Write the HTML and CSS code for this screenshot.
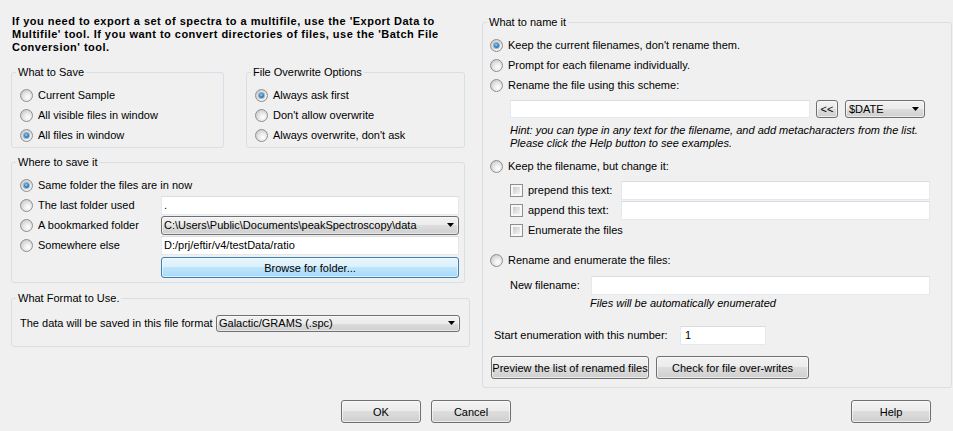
FILE: index.html
```html
<!DOCTYPE html>
<html>
<head>
<meta charset="utf-8">
<link rel="stylesheet" href="styles.css">
</head>
<body>
<div class="dialog">
  <div class="main">
    <div class="left">
      <p class="intro">If you need to export a set of spectra to a multifile, use the 'Export Data to<br>Multifile' tool. If you want to convert directories of files, use the 'Batch File<br>Conversion' tool.</p>
      <div class="pair">
        <fieldset class="grp g-save">
          <legend>What to Save</legend>
          <div class="opts">
            <div class="opt"><span class="rb"></span>Current Sample</div>
            <div class="opt"><span class="rb"></span>All visible files in window</div>
            <div class="opt"><span class="rb on"></span>All files in window</div>
          </div>
        </fieldset>
        <fieldset class="grp g-over">
          <legend>File Overwrite Options</legend>
          <div class="opts">
            <div class="opt"><span class="rb on"></span>Always ask first</div>
            <div class="opt"><span class="rb"></span>Don't allow overwrite</div>
            <div class="opt"><span class="rb"></span>Always overwrite, don't ask</div>
          </div>
        </fieldset>
      </div>
      <fieldset class="grp g-where">
        <legend>Where to save it</legend>
        <div class="where">
          <div class="opt span2"><span class="rb on"></span>Same folder the files are in now</div>
          <div class="opt"><span class="rb"></span>The last folder used</div>
          <div class="tb">.</div>
          <div class="opt"><span class="rb"></span>A bookmarked folder</div>
          <div class="combo"><span>C:\Users\Public\Documents\peakSpectroscopy\data</span><svg class="arr" width="7" height="4" viewBox="0 0 7 4"><path d="M0 0H7L3.5 4Z" fill="#000"/></svg></div>
          <div class="opt"><span class="rb"></span>Somewhere else</div>
          <div class="tb">D:/prj/eftir/v4/testData/ratio</div>
          <div class="btn btn-focus browse">Browse for folder...</div>
        </div>
      </fieldset>
      <fieldset class="grp g-fmt">
        <legend>What Format to Use.</legend>
        <div class="fmt">
          <div class="lbl">The data will be saved in this file format</div>
          <div class="combo combo-fmt"><span>Galactic/GRAMS (.spc)</span><svg class="arr" width="7" height="4" viewBox="0 0 7 4"><path d="M0 0H7L3.5 4Z" fill="#000"/></svg></div>
        </div>
      </fieldset>
    </div>
    <fieldset class="grp g-name">
      <legend>What to name it</legend>
      <div class="nbody">
        <div class="opt"><span class="rb on"></span>Keep the current filenames, don't rename them.</div>
        <div class="opt"><span class="rb"></span>Prompt for each filename individually.</div>
        <div class="opt"><span class="rb"></span>Rename the file using this scheme:</div>
        <div class="scheme">
          <div class="tb tb-scheme"></div>
          <div class="btn btn-sm">&lt;&lt;</div>
          <div class="combo combo-date"><span>$DATE</span><svg class="arr" width="7" height="4" viewBox="0 0 7 4"><path d="M0 0H7L3.5 4Z" fill="#000"/></svg></div>
        </div>
        <p class="hint">Hint: you can type in any text for the filename, and add metacharacters from the list.<br>Please click the Help button to see examples.</p>
        <div class="opt r4"><span class="rb"></span>Keep the filename, but change it:</div>
        <div class="chk">
          <div class="opt"><span class="cb"></span>prepend this text:</div>
          <div class="tb"></div>
          <div class="opt"><span class="cb"></span>append this text:</div>
          <div class="tb"></div>
          <div class="opt span2"><span class="cb"></span>Enumerate the files</div>
        </div>
        <div class="opt r5"><span class="rb"></span>Rename and enumerate the files:</div>
        <div class="newname">
          <div class="lbl">New filename:</div>
          <div class="tb"></div>
        </div>
        <p class="auto">Files will be automatically enumerated</p>
        <div class="start">
          <div class="lbl">Start enumeration with this number:</div>
          <div class="tb tb-num">1</div>
        </div>
        <div class="acts">
          <div class="btn btn-preview"><span>Preview the list of renamed files</span></div>
          <div class="btn btn-check">Check for file over-writes</div>
        </div>
      </div>
    </fieldset>
  </div>
  <div class="bottom">
    <div class="btn btn-dlg">OK</div>
    <div class="btn btn-dlg">Cancel</div>
    <div class="btn btn-dlg help">Help</div>
  </div>
</div>
</body>
</html>
```

FILE: styles.css
```css
* { box-sizing: border-box; }
html, body { margin: 0; padding: 0; }
body {
  background: #f0f0f0;
  font-family: "Liberation Sans", Arial, sans-serif;
  font-size: 11px;
  color: #000;
}
.dialog { width: 953px; height: 431px; overflow: hidden; }
.main { display: flex; gap: 11px; padding: 15px 0 0 11px; align-items: flex-start; }
.left { width: 460px; flex: none; }
.intro { margin: 0; font-weight: bold; line-height: 13px; padding-left: 1px; white-space: nowrap; letter-spacing: 0.48px; }
.pair { display: flex; gap: 22px; margin-top: 11px; }

.grp {
  margin: 0;
  padding: 0;
  border: 1px solid #d5dfe5;
  border-radius: 3px;
  min-width: 0;
}
.grp legend { padding: 0 2px; margin-left: 4px; line-height: 14px; }

.g-save { width: 213px; }
.g-over { width: 219px; }
.opts { padding: 6px 0 2px 8px; }
.opt { display: flex; align-items: center; gap: 5px; height: 20px; white-space: nowrap; }
.span2 { grid-column: 1 / span 2; }

.rb {
  width: 13px; height: 13px; flex: none;
  border-radius: 50%;
  border: 1px solid #8e8f8f;
  background: radial-gradient(circle at 62% 66%, #ffffff 0, #ececec 35%, #bdbdbd 100%);
  display: flex; align-items: center; justify-content: center;
}
.rb.on::after {
  content: "";
  width: 5px; height: 5px; border-radius: 50%;
  background: radial-gradient(circle at 45% 40%, #a6dcfb 0, #2c86cc 45%, #0d4a84 100%);
  box-shadow: 0 0 0 1px rgba(20,70,120,0.35);
}
.cb {
  width: 13px; height: 13px; flex: none;
  border: 1px solid #8e8f8f;
  padding: 2px;
  background: linear-gradient(135deg, #cbcbcb, #f3f3f3) content-box, #f7f7f7;
}

.tb {
  background: #fff;
  border: 1px solid #e3e9ef;
  border-top-color: #d9dde2;
  height: 19px;
  display: flex; align-items: center;
  padding-left: 2px;
  white-space: nowrap; overflow: hidden;
}
.combo {
  display: flex; align-items: center; justify-content: space-between;
  border: 1px solid #707070;
  border-radius: 3px;
  background: linear-gradient(#f2f2f2 0, #ebebeb 50%, #dddddd 50%, #cfcfcf 100%);
  box-shadow: inset 0 0 0 1px rgba(255,255,255,0.55);
  height: 19px;
  padding: 0 4px 0 2px;
  white-space: nowrap; overflow: hidden;
}
.arr { flex: none; }
.btn {
  display: flex; align-items: center; justify-content: center;
  border: 1px solid #707070;
  border-radius: 3px;
  background: linear-gradient(#f2f2f2 0, #ebebeb 50%, #dddddd 50%, #cfcfcf 100%);
  box-shadow: inset 0 0 0 1px rgba(255,255,255,0.6);
  white-space: nowrap; overflow: hidden;
}
.btn-focus {
  border-color: #3c7fb1;
  background: linear-gradient(#eaf6fd 0, #d9f0fc 50%, #bee6fd 50%, #a7d9f5 100%);
}

.g-where { width: 454px; margin-top: 7px; }
.where {
  display: grid;
  grid-template-columns: 141px 298px;
  grid-template-rows: repeat(4, 20px) 23px;
  align-items: center;
  padding: 6px 5px 4px 8px;
}
.browse { grid-column: 2; height: 21px; align-self: end; }

.g-fmt { width: 459px; margin-top: 8px; }
.fmt {
  display: grid;
  grid-template-columns: 196px 244px;
  grid-auto-rows: 20px;
  align-items: center;
  padding: 8px 10px 13px 8px;
}
.combo-fmt { height: 17px; }

.g-name { width: 470px; flex: none; }
.nbody { padding: 6px 0 8px 7px; }
.scheme { display: flex; align-items: center; height: 20px; margin-top: 4px; padding-left: 20px; }
.tb-scheme { width: 300px; height: 18px; }
.btn-sm { width: 22px; height: 18px; margin-left: 6px; }
.combo-date { width: 80px; height: 18px; margin-left: 7px; padding: 0 5px 0 3px; }
.hint { margin: 5px 0 0; padding-left: 20px; font-style: italic; line-height: 13px; white-space: nowrap; }
.r4 { margin-top: 6px; }
.chk {
  display: grid;
  grid-template-columns: 111px 309px;
  grid-auto-rows: 20px;
  align-items: center;
  padding-left: 20px;
  margin-top: 4px;
}
.r5 { margin-top: 10px; }
.newname {
  display: grid;
  grid-template-columns: 81px 339px;
  height: 20px; align-items: center;
  margin-top: 5px; padding-left: 20px;
}
.auto { margin: 2px 0 0; padding-left: 100px; font-style: italic; line-height: 13px; }
.start {
  display: grid;
  grid-template-columns: 186px 86px;
  height: 20px; align-items: center;
  margin-top: 15px; padding-left: 4px;
}
.tb-num { padding-left: 4px; }
.acts { display: flex; gap: 7px; margin-top: 11px; padding-left: 1px; }
.acts .btn { height: 23px; }
.btn-preview { width: 158px; }
.btn-check { width: 153px; }

.bottom { display: flex; gap: 10px; padding: 0 22px 0 341px; margin-top: 12px; }
.btn-dlg { width: 80px; height: 23px; }
.help { margin-left: auto; }
```
